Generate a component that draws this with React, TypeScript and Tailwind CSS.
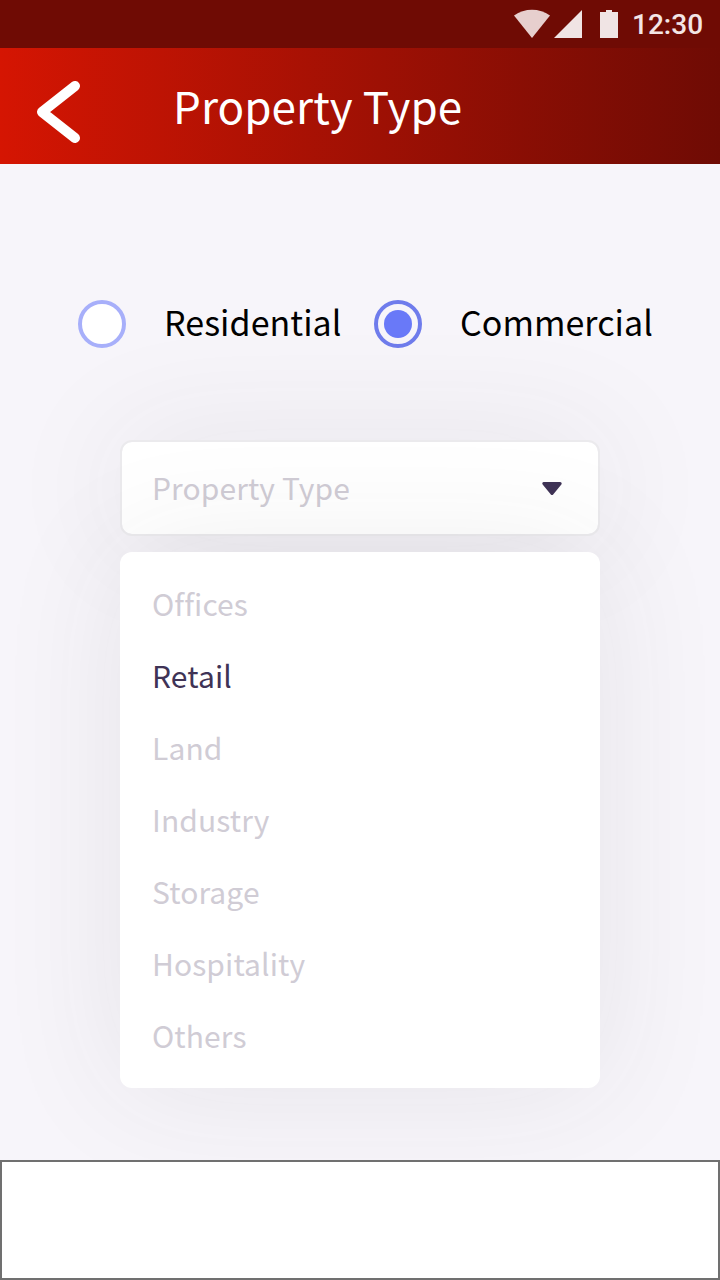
import React from "react";

const options = ["Offices", "Retail", "Land", "Industry", "Storage", "Hospitality", "Others"];

function StatusBar() {
  return (
    <div className="flex h-12 shrink-0 items-center justify-end bg-[#6f0b04] pr-[17px] text-[#f3e5e5]">
      <svg className="mr-[-2px] h-12 w-[120px]" viewBox="0 0 120 48">
        <path d="M0 15.5C10.5 7.8 25.5 7.8 36 15.5L18 38Z" fill="#e7cfce" />
        <path d="M40 38L68 10V38Z" fill="#f0e4e4" />
        <path d="M86 12H92V10H98V12H104V38H86Z" fill="#f0e4e4" />
      </svg>
      <span className="w-[71px] whitespace-nowrap pt-0.5 font-['Roboto',sans-serif] text-[28px] font-medium leading-[48px]">12:30</span>
    </div>
  );
}

function Radio({ label, checked }: { label: string; checked?: boolean }) {
  return (
    <label className="flex items-center">
      <span className={`flex size-12 shrink-0 items-center justify-center rounded-full border-4 ${checked ? "border-[#6f7cec]" : "border-[#a7affa] bg-white"}`}>
        {checked && <span className="size-7 rounded-full bg-[#6979f8]" />}
      </span>
      <span className="ml-[38px] whitespace-nowrap pb-1 text-[34px] leading-[48px] tracking-[0.05px] text-black">{label}</span>
    </label>
  );
}

export default function App() {
  return (
    <div className="flex h-[1280px] w-[720px] flex-col overflow-hidden bg-[#f7f5fa] font-['Noto_Sans_CJK_SC','Noto_Sans_CJK_JP',sans-serif]">
      <StatusBar />
      <header className="flex h-[116px] shrink-0 items-center bg-linear-to-r from-[#d51502] to-[#6f0b04] pl-9">
        <svg className="mt-3 h-16 w-11" viewBox="0 0 44 64" fill="none" stroke="white" strokeWidth="10" strokeLinecap="round" strokeLinejoin="round">
          <path d="M39 6L6 32L39 58" />
        </svg>
        <h1 className="ml-[93px] whitespace-nowrap pb-[3px] text-[44px] leading-[60px] tracking-[0.05px] text-white">Property Type</h1>
      </header>
      <main className="flex flex-1 flex-col items-center pt-[136px]">
        <div className="flex h-12 w-full items-center pl-[78px]">
          <div className="w-[296px]">
            <Radio label="Residential" />
          </div>
          <Radio label="Commercial" checked />
        </div>
        <div className="mt-[92px] flex h-24 w-[480px] items-center justify-between rounded-xl border-2 border-[#ebeaed] bg-white bg-clip-padding pl-[30px] pr-[35px] text-[30px] tracking-[0.1px] text-[#d0ccd5] shadow-[0_0_128px_rgba(50,50,50,0.09)]">
          <span className="pb-0.5">Property Type</span>
          <svg className="mt-0.5 h-4 w-[22px]" viewBox="0 0 22 16">
            <path d="M2.8 2.5H19.2L11 12.5Z" fill="#3f3356" stroke="#3f3356" strokeWidth="3" strokeLinejoin="round" />
          </svg>
        </div>
        <ul className="mt-4 h-[536px] w-[480px] rounded-xl bg-white pl-8 pt-[15px] shadow-[0_0_128px_rgba(50,50,60,0.09)]">
          {options.map((option) => (
            <li key={option} className={`h-[72px] text-[30px] leading-[72px] tracking-[0.1px] ${option === "Retail" ? "text-[#3f3356]" : "text-[#d0ccd5]"}`}>{option}</li>
          ))}
        </ul>
      </main>
      <footer className="z-10 h-[120px] shrink-0 border-2 border-[#707070] bg-white" />
    </div>
  );
}
